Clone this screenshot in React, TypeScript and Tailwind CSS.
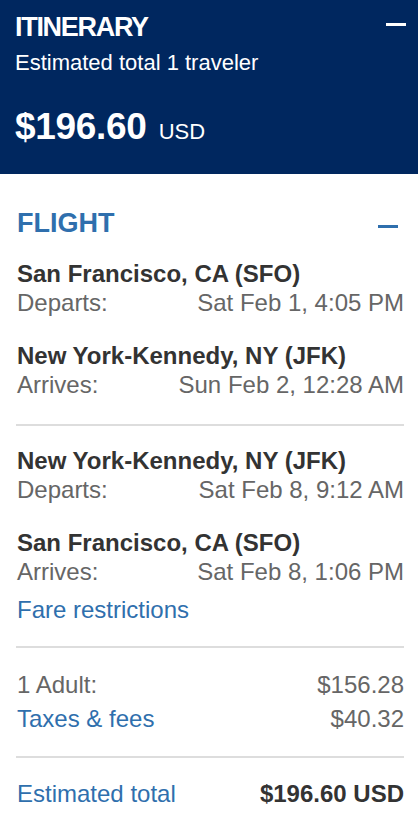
import React from "react";

const F = { fontFamily: '"Liberation Sans", Arial, Helvetica, sans-serif' };

function Row({ label, value }: { label: string; value: string }) {
  return (
    <div className="flex justify-between text-[24px] leading-[29px] text-[#666]">
      <span>{label}</span>
      <span>{value}</span>
    </div>
  );
}

function Leg({ city, label, value }: { city: string; label: string; value: string }) {
  return (
    <div>
      <div className="text-[24px] leading-[29px] font-bold text-[#333]">{city}</div>
      <Row label={label} value={value} />
    </div>
  );
}

export default function App() {
  return (
    <div style={F} className="w-[418px] min-h-[820px] bg-white">
      <div className="bg-[#00275f] text-white pl-[15px] pr-[12px] pt-[12px] pb-[22px]">
        <div className="flex justify-between items-start">
          <div className="text-[27px] leading-[30px] font-bold tracking-[-1.3px]">ITINERARY</div>
          <div className="mt-[11px] w-[20px] h-[3px] bg-white" />
        </div>
        <div className="mt-[8px] text-[22px] leading-[26px]">Estimated total 1 traveler</div>
        <div className="mt-[31px] flex items-baseline gap-[12px] leading-[40px]">
          <span className="text-[37px] font-bold tracking-[-0.3px]">$196.60</span>
          <span className="text-[22px]">USD</span>
        </div>
      </div>
      <div className="pl-[16px] pr-[14px] pt-[33px]">
        <div className="flex justify-between items-center pl-[1px] pr-[6px]">
          <div className="text-[27px] leading-[32px] font-bold text-[#2f6fad]">FLIGHT</div>
          <div className="mt-[7px] w-[20px] h-[3px] bg-[#2f6fad]" />
        </div>
        <div className="pl-[1px] mt-[20px] flex flex-col gap-[24px]">
          <Leg city="San Francisco, CA (SFO)" label="Departs:" value="Sat Feb 1, 4:05 PM" />
          <Leg city="New York-Kennedy, NY (JFK)" label="Arrives:" value="Sun Feb 2, 12:28 AM" />
        </div>
        <div className="mt-[25px] h-[2px] bg-[#dddddd]" />
        <div className="pl-[1px] mt-[20px] flex flex-col gap-[24px]">
          <Leg city="New York-Kennedy, NY (JFK)" label="Departs:" value="Sat Feb 8, 9:12 AM" />
          <Leg city="San Francisco, CA (SFO)" label="Arrives:" value="Sat Feb 8, 1:06 PM" />
        </div>
        <div className="pl-[1px] mt-[9px] text-[24px] leading-[29px] text-[#2f6fad]">Fare restrictions</div>
        <div className="mt-[22px] h-[2px] bg-[#dddddd]" />
        <div className="pl-[1px] mt-[22px] flex flex-col gap-[5px]">
          <Row label="1 Adult:" value="$156.28" />
          <div className="flex justify-between text-[24px] leading-[29px]">
            <span className="text-[#2f6fad]">Taxes &amp; fees</span>
            <span className="text-[#666]">$40.32</span>
          </div>
        </div>
        <div className="mt-[23px] h-[2px] bg-[#dddddd]" />
        <div className="pl-[1px] mt-[21px] flex justify-between text-[24px] leading-[29px]">
          <span className="text-[#2f6fad]">Estimated total</span>
          <span className="font-bold text-[#333]">$196.60 USD</span>
        </div>
      </div>
    </div>
  );
}
